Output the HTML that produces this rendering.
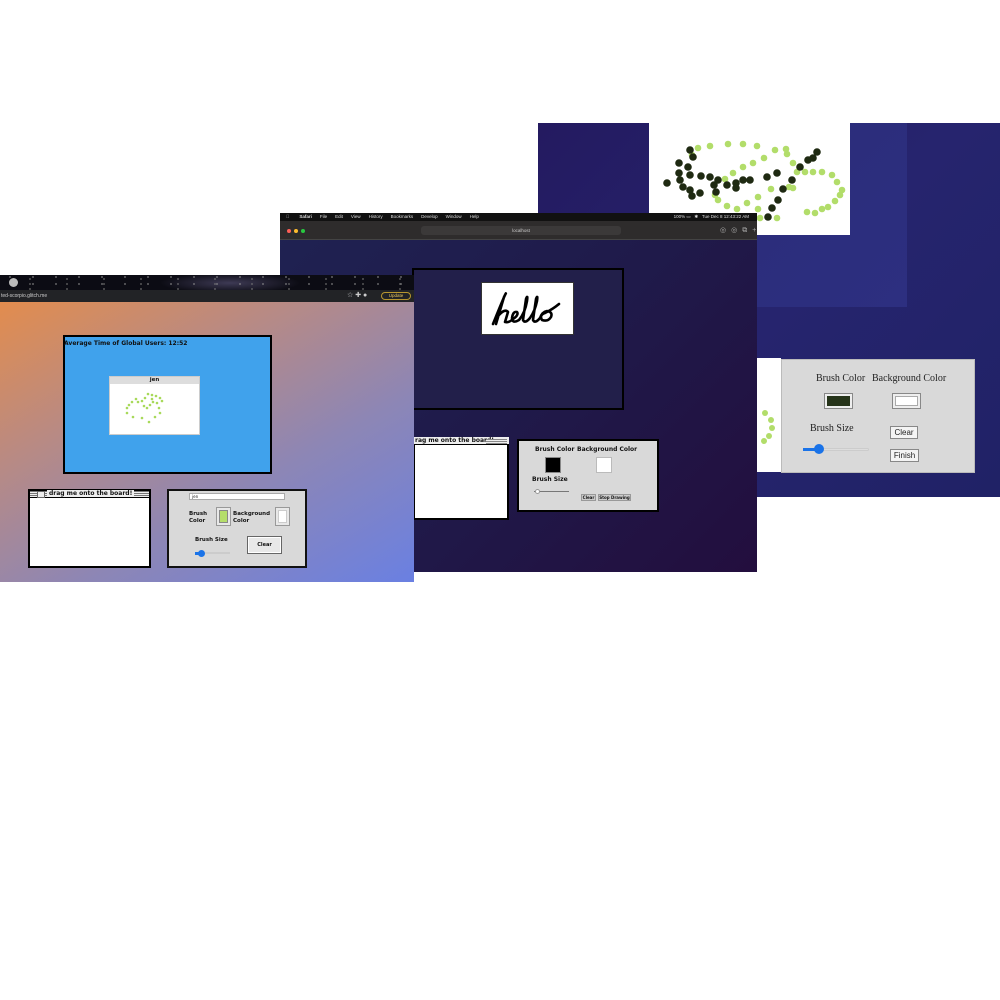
<!DOCTYPE html>
<html><head><meta charset="utf-8"><style>
*{margin:0;padding:0;box-sizing:border-box}
body{width:1000px;height:1000px;background:#fff;position:relative;overflow:hidden;font-family:"Liberation Sans",sans-serif}
.a{position:absolute}
.px{font-family:"DejaVu Sans","Liberation Sans",sans-serif;font-weight:bold;color:#111}
</style></head><body>

<!-- back screenshot -->
<div class="a" style="left:538px;top:123px;width:462px;height:374px;background:linear-gradient(135deg,#241a60,#26246e 50%,#202266)"></div>
<div class="a" style="left:649px;top:123px;width:258px;height:184px;background:linear-gradient(135deg,#2a2b78,#2d2f80)"></div>
<div class="a" style="left:649px;top:123px;width:201px;height:112px;background:#fff"></div>
<svg class="a" style="left:0;top:0" width="1000" height="1000">
<g fill="#b2dd6a">
<circle cx="710" cy="146" r="3.3"/><circle cx="728" cy="144" r="3.3"/><circle cx="743" cy="144" r="3.3"/><circle cx="757" cy="146" r="3.3"/><circle cx="775" cy="150" r="3.3"/><circle cx="786" cy="149" r="3.3"/><circle cx="787" cy="154" r="3.3"/><circle cx="764" cy="158" r="3.3"/><circle cx="753" cy="163" r="3.3"/><circle cx="743" cy="167" r="3.3"/><circle cx="733" cy="173" r="3.3"/><circle cx="725" cy="179" r="3.3"/><circle cx="714" cy="185" r="3.3"/><circle cx="715" cy="195" r="3.3"/><circle cx="718" cy="200" r="3.3"/><circle cx="727" cy="206" r="3.3"/><circle cx="737" cy="209" r="3.3"/><circle cx="747" cy="203" r="3.3"/><circle cx="758" cy="197" r="3.3"/><circle cx="758" cy="209" r="3.3"/><circle cx="771" cy="189" r="3.3"/><circle cx="789" cy="187" r="3.3"/><circle cx="793" cy="188" r="3.3"/><circle cx="793" cy="163" r="3.3"/><circle cx="797" cy="172" r="3.3"/><circle cx="805" cy="172" r="3.3"/><circle cx="813" cy="172" r="3.3"/><circle cx="822" cy="172" r="3.3"/><circle cx="832" cy="175" r="3.3"/><circle cx="837" cy="182" r="3.3"/><circle cx="842" cy="190" r="3.3"/><circle cx="840" cy="195" r="3.3"/><circle cx="835" cy="201" r="3.3"/><circle cx="828" cy="207" r="3.3"/><circle cx="822" cy="209" r="3.3"/><circle cx="815" cy="213" r="3.3"/><circle cx="807" cy="212" r="3.3"/><circle cx="698" cy="148" r="3.3"/><circle cx="692" cy="155" r="3.3"/><circle cx="740" cy="218" r="3.3"/><circle cx="760" cy="218" r="3.3"/><circle cx="777" cy="218" r="3.3"/>
</g>
<g fill="#1f2a12">
<circle cx="690" cy="150" r="3.8"/><circle cx="693" cy="157" r="3.8"/><circle cx="679" cy="163" r="3.8"/><circle cx="688" cy="167" r="3.8"/><circle cx="679" cy="173" r="3.8"/><circle cx="680" cy="180" r="3.8"/><circle cx="667" cy="183" r="3.8"/><circle cx="683" cy="187" r="3.8"/><circle cx="690" cy="190" r="3.8"/><circle cx="692" cy="196" r="3.8"/><circle cx="700" cy="193" r="3.8"/><circle cx="690" cy="175" r="3.8"/><circle cx="701" cy="176" r="3.8"/><circle cx="710" cy="177" r="3.8"/><circle cx="718" cy="180" r="3.8"/><circle cx="714" cy="185" r="3.8"/><circle cx="716" cy="192" r="3.8"/><circle cx="727" cy="185" r="3.8"/><circle cx="736" cy="183" r="3.8"/><circle cx="736" cy="188" r="3.8"/><circle cx="743" cy="180" r="3.8"/><circle cx="750" cy="180" r="3.8"/><circle cx="767" cy="177" r="3.8"/><circle cx="777" cy="173" r="3.8"/><circle cx="783" cy="189" r="3.8"/><circle cx="792" cy="180" r="3.8"/><circle cx="800" cy="167" r="3.8"/><circle cx="808" cy="160" r="3.8"/><circle cx="813" cy="158" r="3.8"/><circle cx="817" cy="152" r="3.8"/><circle cx="778" cy="200" r="3.8"/><circle cx="772" cy="208" r="3.8"/><circle cx="768" cy="217" r="3.8"/>
</g>
</svg>
<div class="a" style="left:757px;top:358px;width:24px;height:114px;background:#fff"></div>
<svg class="a" style="left:757px;top:358px" width="24" height="114"><g fill="#b2dd6a"><circle cx="8" cy="55" r="3"/><circle cx="14" cy="62" r="3"/><circle cx="15" cy="70" r="3"/><circle cx="12" cy="78" r="3"/><circle cx="7" cy="83" r="3"/></g></svg>
<div class="a" style="left:781px;top:359px;width:194px;height:114px;background:#d9d9d9;border:1px solid #bbb;font-family:'Liberation Serif',serif;font-size:10px;color:#222">
 <div class="a" style="left:34px;top:13px">Brush Color</div>
 <div class="a" style="left:90px;top:13px">Background Color</div>
 <div class="a" style="left:42px;top:33px;width:29px;height:16px;border:1px solid #888;background:#eee;padding:2px"><div style="width:100%;height:100%;background:#26341a"></div></div>
 <div class="a" style="left:110px;top:33px;width:29px;height:16px;border:1px solid #888;background:#eee;padding:2px"><div style="width:100%;height:100%;background:#fff;border:1px solid #aaa"></div></div>
 <div class="a" style="left:28px;top:63px">Brush Size</div>
 <div class="a" style="left:30px;top:88px;width:57px;height:3px;background:#ddd;border:1px solid #ccc;border-radius:2px"></div>
 <div class="a" style="left:32px;top:84px;width:10px;height:10px;background:#1a73e8;border-radius:50%"></div>
 <div class="a" style="left:21px;top:88px;width:14px;height:3px;background:#1a73e8"></div>
 <div class="a" style="left:108px;top:66px;width:28px;height:13px;background:#f4f4f4;border:1px solid #888;font-family:'Liberation Sans',sans-serif;font-size:8px;text-align:center;line-height:11px">Clear</div>
 <div class="a" style="left:108px;top:89px;width:29px;height:13px;background:#f4f4f4;border:1px solid #888;font-family:'Liberation Sans',sans-serif;font-size:8px;text-align:center;line-height:11px">Finish</div>
</div>

<!-- middle safari screenshot -->
<div class="a" style="left:280px;top:213px;width:477px;height:359px;background:linear-gradient(135deg,#1f2252,#1f1a4a 50%,#230e3e)"></div>
<div class="a" style="left:280px;top:213px;width:477px;height:8px;background:#111;color:#ddd;font-size:4.5px;line-height:8px;white-space:nowrap">
 <span style="margin-left:6px">&#63743;</span><span style="margin-left:10px;font-weight:bold">Safari</span><span style="margin-left:8px">File</span><span style="margin-left:8px">Edit</span><span style="margin-left:8px">View</span><span style="margin-left:8px">History</span><span style="margin-left:8px">Bookmarks</span><span style="margin-left:8px">Develop</span><span style="margin-left:8px">Window</span><span style="margin-left:8px">Help</span>
 <span class="a" style="right:8px;top:0">100% ▭ &nbsp; ✱ &nbsp; Tue Dec 8 12:43:22 AM</span>
</div>
<div class="a" style="left:280px;top:221px;width:477px;height:19px;background:#2e2c2c;border-bottom:1px solid #444"></div>
<div class="a" style="left:287px;top:229px;width:4px;height:4px;border-radius:50%;background:#fe5f57"></div>
<div class="a" style="left:294px;top:229px;width:4px;height:4px;border-radius:50%;background:#febc2e"></div>
<div class="a" style="left:301px;top:229px;width:4px;height:4px;border-radius:50%;background:#28c840"></div>
<div class="a" style="left:421px;top:226px;width:200px;height:9px;background:#3b3939;border-radius:3px;color:#ccc;font-size:4.5px;text-align:center;line-height:9px">localhost</div>
<div class="a" style="left:720px;top:226px;color:#aaa;font-size:7px;line-height:9px;letter-spacing:5px">◎◎⧉+</div>

<div class="a" style="left:412px;top:268px;width:212px;height:142px;background:#221f4a;border:2px solid #000"></div>
<div class="a" style="left:481px;top:282px;width:93px;height:53px;background:#fff;border:1px solid #333"></div>
<svg class="a" style="left:481px;top:282px" width="93" height="53" viewBox="0 0 93 53"><path d="M12 42 Q20 22 24 13 Q26 9 23 15 L15 42 M17 34 Q24 26 27 30 L24 40 Q28 41 32 37 Q38 33 36 30 Q32 29 31 36 Q31 42 38 38 Q44 31 46 19 Q47 12 45 17 L42 38 Q44 42 49 36 Q54 29 56 19 Q57 12 55 17 L52 38 Q54 42 59 36 Q61 30 66 29 Q72 30 70 35 Q67 40 61 38 Q58 33 64 31 Q72 27 78 22" fill="none" stroke="#000" stroke-width="2.6" stroke-linecap="round" stroke-linejoin="round"/></svg>

<div class="a" style="left:413px;top:437px;width:96px;height:83px;background:#fff;border:2px solid #000"></div>
<div class="a px" style="left:413px;top:437px;width:96px;height:8px;background:#eee;border-bottom:1px solid #000;font-size:6px;line-height:7px;padding-left:2px">rag me onto the board!</div>
<div class="a" style="left:486px;top:439px;width:21px;height:5px;background:repeating-linear-gradient(#888 0 1px,#eee 1px 2px)"></div>

<div class="a px" style="left:517px;top:439px;width:142px;height:73px;background:#d9d9d9;border:2px solid #000;font-size:6px">
 <div class="a" style="left:16px;top:5px">Brush Color</div>
 <div class="a" style="left:58px;top:5px">Background Color</div>
 <div class="a" style="left:26px;top:16px;width:16px;height:16px;background:#000;border:1px solid #888"></div>
 <div class="a" style="left:77px;top:16px;width:16px;height:16px;background:#fff;border:1px solid #bbb"></div>
 <div class="a" style="left:13px;top:35px">Brush Size</div>
 <div class="a" style="left:15px;top:50px;width:35px;height:1px;background:#777"></div>
 <div class="a" style="left:16px;top:48px;width:5px;height:5px;background:#fff;border:1px solid #999;border-radius:50%"></div>
 <div class="a" style="left:62px;top:53px;width:15px;height:7px;background:#ccc;border:1px solid #999;font-size:4px;line-height:5px;text-align:center">Clear</div>
 <div class="a" style="left:79px;top:53px;width:33px;height:7px;background:#ccc;border:1px solid #999;font-size:4px;line-height:5px;text-align:center">Stop Drawing</div>
</div>

<!-- front chrome screenshot -->
<div class="a" style="left:0;top:275px;width:414px;height:307px;background:linear-gradient(150deg,#e98d45 0%,#b88a84 35%,#8d86b5 65%,#6a80e2 100%)"></div>
<div class="a" style="left:0;top:275px;width:414px;height:15px;background:radial-gradient(circle at 30px 4px,#777 0.6px,transparent 1px) 0 0/37px 5px,radial-gradient(circle at 10px 2px,#999 0.5px,transparent 1px) 0 0/23px 7px,radial-gradient(ellipse 70px 10px at 230px 8px,#3e3a55,#0c0c14)"></div>
<div class="a" style="left:9px;top:278px;width:9px;height:9px;border-radius:50%;background:#bbb"></div>
<div class="a" style="left:0;top:290px;width:414px;height:12px;background:#222326;color:#ccc;font-size:5px;line-height:12px;padding-left:1px">ted-scorpio.glitch.me</div>
<div class="a" style="left:381px;top:292px;width:30px;height:8px;border:1px solid #b8962e;border-radius:4px;color:#e6c45e;font-size:4.5px;line-height:6px;text-align:center">Update</div>
<div class="a" style="left:347px;top:291px;color:#ccc;font-size:7px;line-height:9px">☆ ✚ ●</div>

<div class="a" style="left:63px;top:335px;width:209px;height:139px;background:#40a2ec;border:2px solid #000"></div>
<div class="a px" style="left:64px;top:340px;font-size:6px">Average Time of Global Users: 12:52</div>
<div class="a" style="left:109px;top:376px;width:91px;height:59px;background:#fff;border:1px solid #ccc"></div>
<div class="a px" style="left:110px;top:377px;width:89px;height:7px;background:#ddd;font-size:5.5px;text-align:center;line-height:7px">jen</div>
<svg class="a" style="left:100px;top:370px" width="110" height="70"><g fill="#a8d95a">
<circle cx="48" cy="24" r="1.3"/><circle cx="52" cy="25" r="1.3"/><circle cx="56" cy="26" r="1.3"/><circle cx="60" cy="28" r="1.3"/><circle cx="62" cy="31" r="1.3"/><circle cx="57" cy="33" r="1.3"/><circle cx="53" cy="32" r="1.3"/><circle cx="50" cy="35" r="1.3"/><circle cx="52" cy="29" r="1.3"/><circle cx="45" cy="28" r="1.3"/><circle cx="42" cy="31" r="1.3"/><circle cx="38" cy="32" r="1.3"/><circle cx="36" cy="29" r="1.3"/><circle cx="32" cy="32" r="1.3"/><circle cx="29" cy="35" r="1.3"/><circle cx="27" cy="38" r="1.3"/><circle cx="27" cy="43" r="1.3"/><circle cx="33" cy="47" r="1.3"/><circle cx="42" cy="48" r="1.3"/><circle cx="49" cy="52" r="1.3"/><circle cx="55" cy="47" r="1.3"/><circle cx="60" cy="43" r="1.3"/><circle cx="59" cy="38" r="1.3"/><circle cx="47" cy="38" r="1.3"/><circle cx="44" cy="36" r="1.3"/>
</g></svg>

<div class="a" style="left:28px;top:489px;width:123px;height:79px;background:#fff;border:2px solid #000"></div>
<div class="a" style="left:28px;top:489px;width:123px;height:9px;background:repeating-linear-gradient(#777 0 1px,#eee 1px 2px);border:2px solid #000;border-bottom:1px solid #000"></div>
<div class="a" style="left:37px;top:491px;width:8px;height:7px;background:#eee;border:1px solid #666"></div>
<div class="a px" style="left:47px;top:490px;background:#eee;font-size:6px;line-height:7px;padding:0 2px">drag me onto the board!</div>

<div class="a px" style="left:167px;top:489px;width:140px;height:79px;background:#d9d9d9;border:2px solid #111;font-size:5.5px;line-height:7px">
 <div class="a" style="left:20px;top:2px;width:96px;height:7px;background:#fff;border:1px solid #aaa;font-weight:normal;font-size:4px;line-height:5px;padding-left:2px">jen</div>
 <div class="a" style="left:20px;top:20px">Brush<br>Color</div>
 <div class="a" style="left:47px;top:16px;width:15px;height:19px;background:#e8e8e8;border:1px solid #999;padding:2px"><div style="width:100%;height:100%;background:#b5de6a;border:1px solid #888"></div></div>
 <div class="a" style="left:64px;top:20px">Background<br>Color</div>
 <div class="a" style="left:106px;top:16px;width:15px;height:19px;background:#e8e8e8;border:1px solid #999;padding:2px"><div style="width:100%;height:100%;background:#fff;border:1px solid #ccc"></div></div>
 <div class="a" style="left:26px;top:46px">Brush Size</div>
 <div class="a" style="left:27px;top:61px;width:34px;height:2px;background:#ccc"></div>
 <div class="a" style="left:29px;top:59px;width:7px;height:7px;background:#1a73e8;border-radius:50%"></div>
 <div class="a" style="left:26px;top:61px;width:6px;height:3px;background:#1a73e8"></div>
 <div class="a" style="left:78px;top:45px;width:35px;height:18px;background:#e8e8e8;border:1px solid #666;box-shadow:inset 0 0 0 1px #fff;font-size:5px;text-align:center;line-height:16px">Clear</div>
</div>

</body></html>
